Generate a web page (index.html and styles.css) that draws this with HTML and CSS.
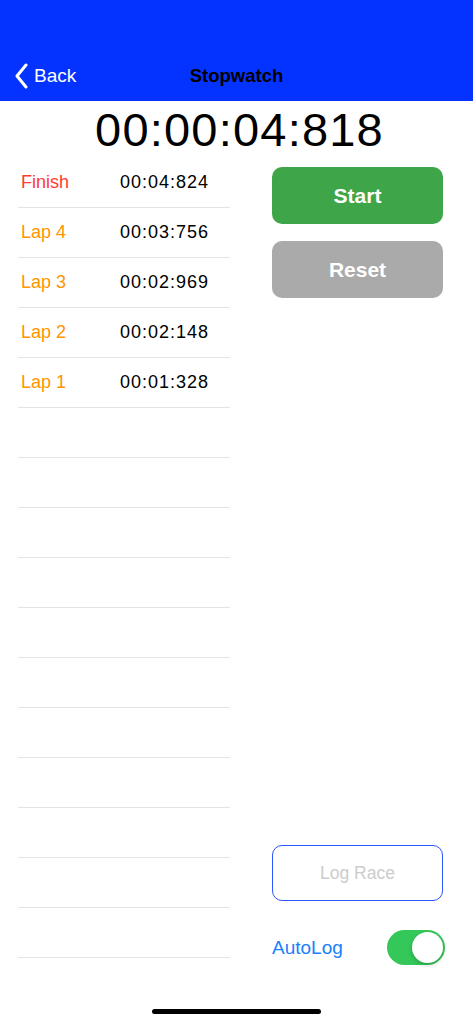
FILE: index.html
```html
<!DOCTYPE html>
<html lang="en">
<head>
<meta charset="utf-8">
<title>Stopwatch</title>
<link rel="stylesheet" href="styles.css">
</head>
<body>
<header class="header">
  <nav class="nav">
    <div class="back">
      <svg class="chev" width="14" height="26" viewBox="0 0 14 26"><path d="M12 2 L3 13 L12 24" fill="none" stroke="#fff" stroke-width="3" stroke-linecap="round" stroke-linejoin="round"/></svg>
      <span>Back</span>
    </div>
    <div class="title">Stopwatch</div>
    <div></div>
  </nav>
</header>
<div class="clock">00:00:04:818</div>
<main class="main">
  <div class="laps">
    <div class="row"><span class="label finish">Finish</span><span class="time">00:04:824</span></div>
    <div class="row"><span class="label lap">Lap 4</span><span class="time">00:03:756</span></div>
    <div class="row"><span class="label lap">Lap 3</span><span class="time">00:02:969</span></div>
    <div class="row"><span class="label lap">Lap 2</span><span class="time">00:02:148</span></div>
    <div class="row"><span class="label lap">Lap 1</span><span class="time">00:01:328</span></div>
    <div class="row"></div>
    <div class="row"></div>
    <div class="row"></div>
    <div class="row"></div>
    <div class="row"></div>
    <div class="row"></div>
    <div class="row"></div>
    <div class="row"></div>
    <div class="row"></div>
    <div class="row"></div>
    <div class="row"></div>
  </div>
  <div class="side">
    <div class="btn start">Start</div>
    <div class="btn reset">Reset</div>
    <div class="log">Log Race</div>
    <div class="auto">
      <span class="auto-label">AutoLog</span>
      <div class="switch"><div class="knob"></div></div>
    </div>
  </div>
</main>
<div class="home"></div>
</body>
</html>
```
FILE: styles.css
```css
* { box-sizing: border-box; }
html, body { margin: 0; padding: 0; background: #fff; }
body {
  width: 473px;
  font-family: "Liberation Sans", Arial, sans-serif;
  color: #000;
}
.header {
  height: 101px;
  background: #0433ff;
  padding-top: 54px;
}
.nav {
  height: 44px;
  display: grid;
  grid-template-columns: 1fr auto 1fr;
  align-items: center;
}
.back {
  display: flex;
  align-items: center;
  gap: 6px;
  padding-left: 14px;
  color: #fff;
  font-size: 19px;
}
.chev { display: block; }
.title {
  font-size: 18.5px;
  font-weight: bold;
  color: #000;
}
.clock {
  height: 57px;
  line-height: 56px;
  padding-top: 1px;
  padding-left: 6px;
  text-align: center;
  font-size: 47px;
  letter-spacing: 1.2px;
}
.main {
  display: flex;
  gap: 42px;
  padding-left: 18px;
  height: 807px;
}
.laps { width: 212px; }
.row {
  height: 50px;
  border-bottom: 1px solid #e4e4e4;
  display: flex;
  align-items: center;
  font-size: 18px;
}
.label { width: 102px; padding-left: 3px; }
.finish { color: #ff3b30; }
.lap { color: #ff9500; }
.time { letter-spacing: 1px; }
.side {
  width: 171px;
  display: flex;
  flex-direction: column;
  padding-top: 9px;
}
.btn {
  height: 57px;
  border-radius: 10px;
  color: #fff;
  font-weight: bold;
  font-size: 21px;
  display: flex;
  align-items: center;
  justify-content: center;
}
.start { background: #3ea648; }
.reset { background: #aaaaaa; margin-top: 17px; }
.log {
  margin-top: auto;
  height: 56px;
  border: 1.5px solid #2a55ff;
  border-radius: 10px;
  color: #cccccc;
  font-size: 17.5px;
  display: flex;
  align-items: center;
  justify-content: center;
}
.auto {
  margin-top: 29px;
  margin-right: -2px;
  height: 35px;
  display: flex;
  align-items: center;
  justify-content: space-between;
}
.auto-label { color: #1a7ffa; font-size: 19px; }
.switch {
  width: 58px;
  height: 35px;
  border-radius: 18px;
  background: #34c759;
  position: relative;
}
.knob {
  position: absolute;
  right: 2px;
  top: 2px;
  width: 31px;
  height: 31px;
  border-radius: 50%;
  background: #fff;
  box-shadow: 0 2px 4px rgba(0,0,0,0.2);
}
.home {
  width: 169px;
  height: 5px;
  border-radius: 3px;
  background: #000;
  margin: 44px auto 0;
}
```
